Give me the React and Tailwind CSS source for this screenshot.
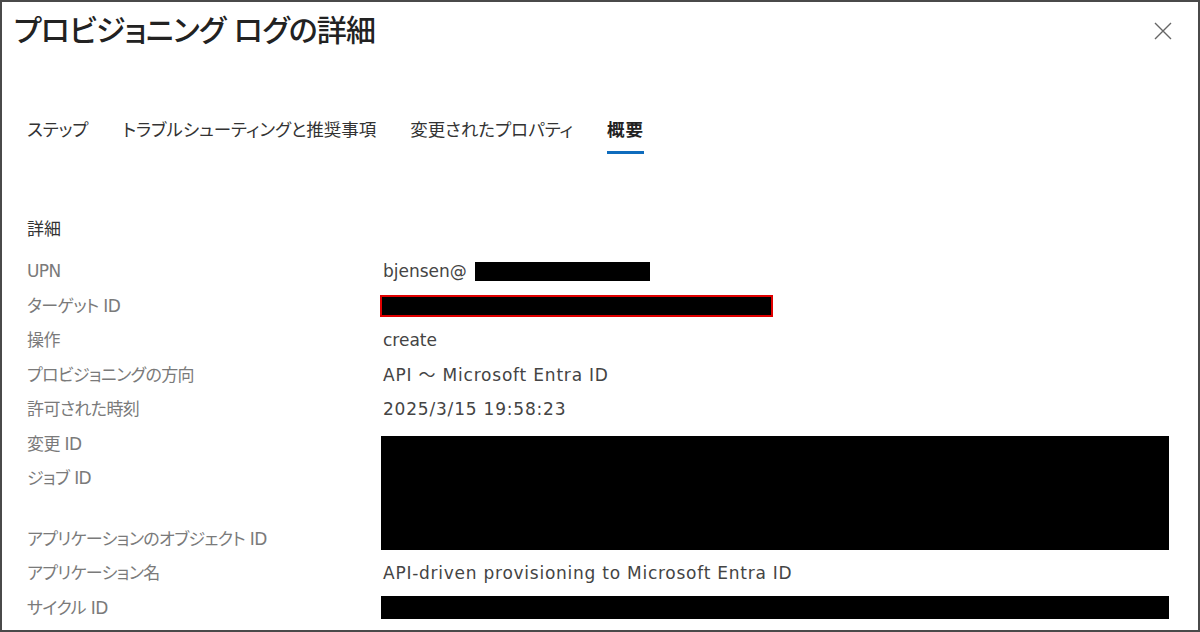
import React from "react";

const rows = [
  { label: "UPN", kind: "upn" },
  { label: "ターゲット ID", kind: "target" },
  { label: "操作", value: "create" },
  { label: "プロビジョニングの方向", value: "API ～ Microsoft Entra ID", wide: true },
  { label: "許可された時刻", value: "2025/3/15 19:58:23", wide: true },
];

const tabs = ["ステップ", "トラブルシューティングと推奨事項", "変更されたプロパティ", "概要"];

const Row = ({ label, children }) => (
  <div className="flex h-[34.5px] items-center">
    <div className="w-[356px] shrink-0 text-[#7a7a7a] tracking-[-0.6px]">{label}</div>
    <div className="flex items-center text-[#444]">{children}</div>
  </div>
);

export default function App() {
  return (
    <div className="w-[1200px] h-[632px] bg-white border-2 border-[#4a4a4a] overflow-hidden font-['DejaVu_Sans','Noto_Sans_CJK_JP',sans-serif] [font-feature-settings:'palt'] text-[17px] leading-[24px]">
      {/* header */}
      <div className="flex items-center justify-between pl-[12px] pr-[26px] pt-[11px]">
        <h1 className="text-[30px] leading-[36px] font-medium tracking-[-0.8px] text-[#222]">
          プロビジョニング ログの詳細
        </h1>
        <button className="text-[#666]">
          <svg width="18" height="18" viewBox="0 0 18 18" fill="none" stroke="currentColor" strokeWidth="1.4">
            <path d="M1 1l16 16M17 1L1 17" />
          </svg>
        </button>
      </div>

      {/* tabs */}
      <div className="flex gap-[34px] pl-[25px] mt-[69px] text-[17.5px]">
        {tabs.map((t, i) => (
          <div
            key={i}
            className={
              i === 3
                ? "pb-[9px] border-b-[3px] border-[#0f6cbd] font-bold text-[#222] tracking-[1px]"
                : "pb-[9px] border-b-[3px] border-transparent text-[#333]"
            }
          >
            {t}
          </div>
        ))}
      </div>

      {/* details */}
      <div className="pl-[25px] mt-[63px]">
        <div className="text-[#333] mb-[13px]">詳細</div>

        {rows.map((r, i) => (
          <Row key={i} label={r.label}>
            {r.kind === "upn" && (
              <>
                <span>bjensen@</span>
                <span className="ml-[8px] inline-block w-[175px] h-[19px] bg-black" />
              </>
            )}
            {r.kind === "target" && (
              <span className="-ml-[3px] inline-block w-[393px] h-[22px] bg-black border-2 border-[#e00000]" />
            )}
            {r.value && (
              <span className={r.wide ? "tracking-[0.8px]" : ""}>{r.value}</span>
            )}
          </Row>
        ))}

        <div className="flex">
          <div className="w-[356px] shrink-0 text-[#7a7a7a] tracking-[-0.6px]">
            <div className="h-[34.5px] flex items-center">変更 ID</div>
            <div className="h-[34.5px] flex items-center">ジョブ ID</div>
            <div className="h-[26px]" />
            <div className="h-[34.5px] flex items-center">アプリケーションのオブジェクト ID</div>
          </div>
          <div className="-ml-[2px] mt-[9px] w-[788px] h-[114px] bg-black" />
        </div>

        <Row label="アプリケーション名">
          <span className="tracking-[0.75px]">API-driven provisioning to Microsoft Entra ID</span>
        </Row>
        <Row label="サイクル ID">
          <span className="-ml-[2px] inline-block w-[788px] h-[23px] bg-black" />
        </Row>
      </div>
    </div>
  );
}
